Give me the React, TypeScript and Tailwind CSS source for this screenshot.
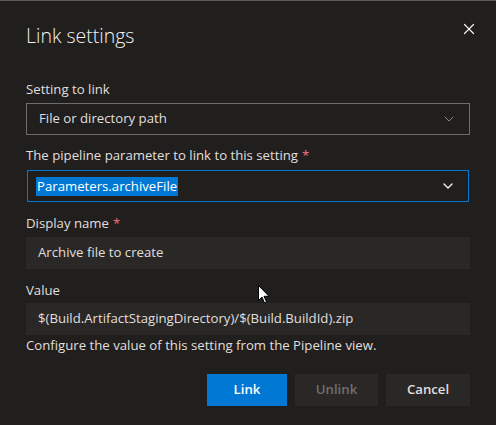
import { X, ChevronDown } from 'lucide-react'

const font = { fontFamily: '"Open Sans", "Noto Sans", sans-serif' }

function Label({ text, required }: { text: string; required?: boolean }) {
  return (
    <div className="h-5 text-[13.2px] leading-5 text-[#e1dfdd]">
      {text}
      {required && <span className="ml-1 text-[#f1707b]">*</span>}
    </div>
  )
}

export default function App() {
  return (
    <div
      className="relative h-[425px] w-[496px] overflow-hidden border-t border-[#5c5b5a] bg-[#201f1e] text-[#e1dfdd]"
      style={font}
    >
      <div className="flex items-start justify-between pl-[26px] pr-[18px] pt-[21px]">
        <h2 className="text-[19.5px] font-light leading-7 text-[#f3f2f1]">Link settings</h2>
        <button className="mt-[-2px] text-[#f3f2f1]">
          <X className="h-[18px] w-[18px]" strokeWidth={1.6} />
        </button>
      </div>

      <div className="px-[26px]">
        <div className="mt-[29px]">
          <Label text="Setting to link" />
          <div className="mt-1 flex h-8 items-center justify-between border border-[#6e6d6c] pl-3 pr-3 text-[13.2px]">
            <span>File or directory path</span>
            <ChevronDown className="h-4 w-4 text-[#8a8886]" strokeWidth={1.5} />
          </div>
        </div>

        <div className="mt-[10px]">
          <Label text="The pipeline parameter to link to this setting" required />
          <div className="mx-px mt-[5px] flex h-8 items-center justify-between border border-[#0078d4] pl-2 pr-3 text-[13.2px]">
            <span className="bg-[#0078d4] px-px leading-[19px] text-white">Parameters.archiveFile</span>
            <ChevronDown className="h-4 w-4 text-[#f3f2f1]" strokeWidth={2} />
          </div>
        </div>

        <div className="mt-[11px]">
          <Label text="Display name" required />
          <div className="mt-1 flex h-8 items-center bg-[#292827] pl-3 text-[13.2px]">
            Archive file to create
          </div>
        </div>

        <div className="mt-[11px]">
          <Label text="Value" />
          <div className="mt-[3px] flex h-8 items-center bg-[#292827] pl-3 text-[13.2px]">
            $(Build.ArtifactStagingDirectory)/$(Build.BuildId).zip
          </div>
          <div className="text-[13.2px] leading-5">Configure the value of this setting from the Pipeline view.</div>
        </div>

        <div className="mt-[19px] flex justify-end gap-2">
          <button className="h-8 w-20 bg-[#0078d4] text-[13.2px] font-semibold text-white">Link</button>
          <button className="h-8 w-[83px] bg-[#292827] text-[13.2px] font-semibold text-[#6f6e6d]">Unlink</button>
          <button className="h-8 w-[84px] bg-[#292827] text-[13.2px] font-semibold text-[#e1dfdd]">Cancel</button>
        </div>
      </div>

      <svg className="absolute left-[258px] top-[284px]" width="13" height="20" viewBox="0 0 13 20">
        <path d="M0.5 0.5 L0.5 15.5 L4 12 L6.5 18 L8.5 17 L6 11.3 L11 11.3 Z" fill="#fff" stroke="#000" strokeWidth="1" />
      </svg>
    </div>
  )
}
